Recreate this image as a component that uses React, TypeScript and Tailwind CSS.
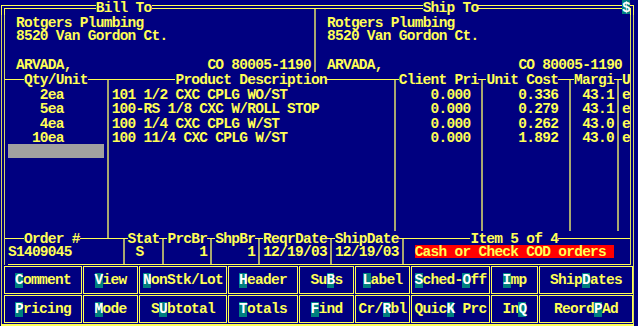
import type { ReactNode } from 'react'

// one text column = 7.975px (80 cols across 638px)
const W: Record<number, string> = {
  1: 'w-[var(--c)]',
  2: 'w-[calc(var(--c)*2)]',
  3: 'w-[calc(var(--c)*3)]',
  4: 'w-[calc(var(--c)*4)]',
  5: 'w-[calc(var(--c)*5)]',
  7: 'w-[calc(var(--c)*7)]',
  8: 'w-[calc(var(--c)*8)]',
  9: 'w-[calc(var(--c)*9)]',
  10: 'w-[calc(var(--c)*10)]',
  11: 'w-[calc(var(--c)*11)]',
  12: 'w-[calc(var(--c)*12)]',
  13: 'w-[calc(var(--c)*13)]',
  14: 'w-[calc(var(--c)*14)]',
  18: 'w-[calc(var(--c)*18)]',
  19: 'w-[calc(var(--c)*19)]',
  20: 'w-[calc(var(--c)*20)]',
  25: 'w-[calc(var(--c)*25)]',
  28: 'w-[calc(var(--c)*28)]',
  35: 'w-[calc(var(--c)*35)]',
  38: 'w-[calc(var(--c)*38)]',
  39: 'w-[calc(var(--c)*39)]',
}

const LINE = 'bg-[#ffff55]'
const RULE = 'bg-[#a8a870]'
const EDGE = 'bg-[#d8d860]'

const ITEMS = [
  { qty: '2ea', desc: '101 1/2 CXC CPLG WO/ST', price: '0.000', cost: '0.336', margin: '43.1', h: 'h-[14px]' },
  { qty: '5ea', desc: '100-RS 1/8 CXC W/ROLL STOP', price: '0.000', cost: '0.279', margin: '43.1', h: 'h-[15px]' },
  { qty: '4ea', desc: '100 1/4 CXC CPLG W/ST', price: '0.000', cost: '0.262', margin: '43.0', h: 'h-[14px]' },
  { qty: '10ea', desc: '100 11/4 CXC CPLG W/ST', price: '0.000', cost: '1.892', margin: '43.0', h: 'h-[14px]' },
]

const BUTTONS: [string, number[]][][] = [
  [
    ['Comment', [0]], ['View', [0]], ['NonStk/Lot', [0]], ['Header', [0]], ['SuBs', [2]],
    ['Label', [0]], ['Sched-Off', [0, 6]], ['Imp', [0]], ['ShipDates', [4]],
  ],
  [
    ['Pricing', [0]], ['Mode', [0]], ['SUbtotal', [1]], ['Totals', [0]], ['Find', [0]],
    ['Cr/Rbl', [3]], ['QuicK Prc', [4]], ['InQ', [2]], ['ReordPAd', [5]],
  ],
]

function Cell({ n, className = '', children }: { n: number; className?: string; children?: ReactNode }) {
  return <span className={`${W[n]} shrink-0 flex items-center pt-[2px] whitespace-pre ${className}`}>{children}</span>
}

function HL({ n }: { n: number }) {
  return (
    <span className={`${W[n]} shrink-0 flex items-center`}>
      <span className={`h-px w-full ${LINE}`} />
    </span>
  )
}

function VL() {
  return (
    <span className={`${W[1]} shrink-0 flex justify-center`}>
      <span className={`w-[2px] ${RULE}`} />
    </span>
  )
}

function Tee({ up = false }: { up?: boolean }) {
  return (
    <span className={`${W[1]} shrink-0 flex flex-col`}>
      <span className="flex-1 flex justify-center">{up && <span className={`w-[2px] ${RULE}`} />}</span>
      <span className={`h-px ${LINE}`} />
      <span className="flex-1 flex justify-center">{!up && <span className={`w-[2px] ${RULE}`} />}</span>
    </span>
  )
}

function TopLine({ n }: { n: number }) {
  return (
    <span className={`${W[n]} shrink-0 pt-[5px]`}>
      <span className="block h-[4px] border-y border-[#ffff55]" />
    </span>
  )
}

function LE({ tee = false }: { tee?: boolean }) {
  return (
    <span className={`${W[1]} shrink-0 flex pl-px`}>
      <span className={`w-px ${EDGE}`} />
      <span className={`w-px ml-[2px] ${EDGE}`} />
      {tee && (
        <span className="flex-1 flex items-center">
          <span className={`h-px w-full ${LINE}`} />
        </span>
      )}
    </span>
  )
}

function RE() {
  return (
    <span className="flex-1 flex">
      <span className={`w-px ${EDGE}`} />
      <span className={`w-px ml-[2px] ${EDGE}`} />
    </span>
  )
}

function Row({ h, children }: { h: string; children: ReactNode }) {
  return (
    <div className={`flex shrink-0 ${h}`}>
      <LE />
      {children}
      <RE />
    </div>
  )
}

function ListRow({ h, children }: { h: string; children?: ReactNode }) {
  return (
    <Row h={h}>
      {children ?? <Cell n={12} />}
      <VL />
      <Cell n={35} />
      <VL />
      <Cell n={10} />
      <VL />
      <Cell n={10} />
      <VL />
      <Cell n={5} />
      <VL />
      <Cell n={1} />
    </Row>
  )
}

function FnButton({ label, keys }: { label: string; keys: number[] }) {
  return (
    <div className="border border-[#ffff55] flex items-center justify-center">
      <span className="whitespace-pre pt-px">
        {label.split('').map((ch, i) =>
          keys.includes(i) ? (
            <span key={i} className="inline-block leading-[15px] bg-[#008080] text-white">{ch}</span>
          ) : (
            <span key={i}>{ch}</span>
          )
        )}
      </span>
    </div>
  )
}

export default function App() {
  return (
    <div className="w-[638px] h-[326px] overflow-hidden flex flex-col bg-[#000080] text-[#ffff55] font-['Liberation_Mono',monospace] font-bold text-[14.5px] leading-[11px] tracking-[-0.725px] [--c:7.975px]">
      {/* top frame with titles */}
      <div className="flex shrink-0 h-[15px]">
        <span className={`${W[1]} shrink-0 pt-[5px] pl-px`}>
          <span className="block h-full border-l border-t border-[#ffff55] pt-[2px] pl-[2px]">
            <span className="block h-full border-l border-t border-[#ffff55]" />
          </span>
        </span>
        <TopLine n={11} />
        <Cell n={7}>Bill To</Cell>
        <TopLine n={20} />
        <span className={`${W[1]} shrink-0 flex flex-col pt-[5px]`}>
          <span className="h-[4px] border-y border-[#ffff55]" />
          <span className="flex-1 flex justify-center">
            <span className={`w-[2px] ${RULE}`} />
          </span>
        </span>
        <TopLine n={13} />
        <Cell n={7}>Ship To</Cell>
        <TopLine n={18} />
        <span className={`${W[1]} shrink-0 self-start h-[14px] pt-[2px] flex items-center justify-center bg-[#008080] text-white`}>$</span>
        <span className="flex-1 pt-[5px]">
          <span className="block w-[4px] h-full border-t border-r border-[#ffff55] pt-[2px]">
            <span className="block w-px h-full border-t border-r border-[#ffff55]" />
          </span>
        </span>
      </div>

      {/* bill to / ship to */}
      <Row h="h-[14px]">
        <Cell n={38}> Rotgers Plumbing</Cell>
        <VL />
        <Cell n={39}> Rotgers Plumbing</Cell>
      </Row>
      <Row h="h-[13px]">
        <Cell n={38}> 8520 Van Gordon Ct.</Cell>
        <VL />
        <Cell n={39}> 8520 Van Gordon Ct.</Cell>
      </Row>
      <Row h="h-[15px]">
        <Cell n={38} />
        <VL />
        <Cell n={39} />
      </Row>
      <Row h="h-[15px]">
        <Cell n={38}>{' ARVADA,' + ' '.repeat(17) + 'CO 80005-1190'}</Cell>
        <VL />
        <Cell n={39}>{' ARVADA,' + ' '.repeat(17) + 'CO 80005-1190 '}</Cell>
      </Row>

      {/* list header */}
      <div className="flex shrink-0 h-[15px]">
        <LE tee />
        <HL n={2} />
        <Cell n={8}>Qty/Unit</Cell>
        <HL n={2} />
        <Tee />
        <HL n={8} />
        <Cell n={19}>Product Description</Cell>
        <HL n={8} />
        <Tee />
        <Cell n={10}>Client Pri</Cell>
        <Tee />
        <Cell n={9}>Unit Cost</Cell>
        <HL n={1} />
        <Tee />
        <Cell n={5}>Margi</Cell>
        <Tee />
        <Cell n={1}>U</Cell>
        <RE />
      </div>

      {/* line items */}
      {ITEMS.map((it) => (
        <Row key={it.desc} h={it.h}>
          <Cell n={12}>{it.qty.padStart(7).padEnd(12)}</Cell>
          <VL />
          <Cell n={35}>{it.desc}</Cell>
          <VL />
          <Cell n={10}>{it.price.padStart(9) + ' '}</Cell>
          <VL />
          <Cell n={10}>{it.cost.padStart(9) + ' '}</Cell>
          <VL />
          <Cell n={5}>{it.margin.padStart(5)}</Cell>
          <VL />
          <Cell n={1}>e</Cell>
        </Row>
      ))}
      <ListRow h="h-[14px]">
        <Cell n={12} className="bg-[#a0a0a0]" />
      </ListRow>
      <ListRow h="h-[73px]" />

      {/* order info header */}
      <div className="flex shrink-0 h-[14px]">
        <LE tee />
        <HL n={2} />
        <Cell n={7}>Order #</Cell>
        <HL n={3} />
        <Tee up />
        <HL n={1} />
        <Tee />
        <Cell n={4}>Stat</Cell>
        <Tee />
        <Cell n={5}>PrcBr</Cell>
        <Tee />
        <Cell n={5}>ShpBr</Cell>
        <Tee />
        <Cell n={8}>ReqrDate</Cell>
        <Tee />
        <Cell n={8}>ShipDate</Cell>
        <Tee />
        <HL n={8} />
        <Cell n={11}>Item 5 of 4</Cell>
        <HL n={9} />
        <RE />
      </div>
      <Row h="h-[13px]">
        <Cell n={14}>S1409045</Cell>
        <VL />
        <Cell n={4}> S</Cell>
        <VL />
        <Cell n={5}>{'    1'}</Cell>
        <VL />
        <Cell n={5}>{'    1'}</Cell>
        <VL />
        <Cell n={8}>12/19/03</Cell>
        <VL />
        <Cell n={8}>12/19/03</Cell>
        <VL />
        <Cell n={1} />
        <Cell n={25} className="bg-[#ff0000]">Cash or Check COD orders </Cell>
        <Cell n={2} />
      </Row>
      <Row h="h-[7px]">
        <span className="flex border-b border-[#ffff55]">
          <Cell n={14} />
          <VL />
          <Cell n={4} />
          <VL />
          <Cell n={5} />
          <VL />
          <Cell n={5} />
          <VL />
          <Cell n={8} />
          <VL />
          <Cell n={8} />
          <VL />
          <Cell n={28} />
        </span>
      </Row>

      {/* function keys */}
      <div className="flex shrink-0 h-[59px]">
        <span className="w-[4px] shrink-0 pl-px">
          <span className={`block w-px h-full ${EDGE}`} />
        </span>
        <div className="w-[629px] shrink-0 flex flex-col gap-px pt-px">
          {BUTTONS.map((row, r) => (
            <div key={r} className="h-[28px] grid grid-cols-[78px_55px_88px_70px_55px_55px_79px_47px_94px] gap-px">
              {row.map(([label, keys]) => (
                <FnButton key={label} label={label} keys={keys} />
              ))}
            </div>
          ))}
        </div>
        <span className="flex-1">
          <span className={`block w-px h-full ${EDGE}`} />
        </span>
      </div>
      <div className="h-[2px] shrink-0 ml-px mr-[4px] bg-[#ffff55]" />
    </div>
  )
}
